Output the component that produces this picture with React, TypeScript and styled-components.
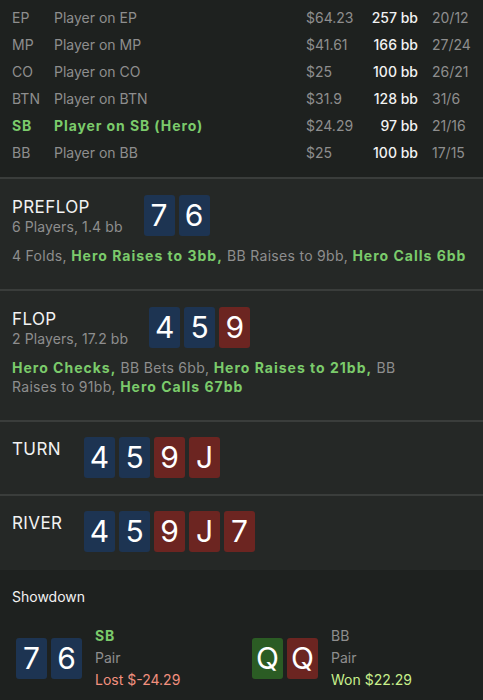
import styled, { createGlobalStyle } from "styled-components";

type Suit = "s" | "h" | "c" | "d";
type Card = { rank: string; suit: Suit };

const GlobalStyle = createGlobalStyle`
  html, body {
    margin: 0;
    padding: 0;
    background: #1e211f;
  }
  body {
    font-family: Inter, "Noto Sans", "Liberation Sans", sans-serif;
    -webkit-font-smoothing: antialiased;
  }
`;

const players = [
  { pos: "EP", name: "Player on EP", stack: "$64.23", bb: "257 bb", stat: "20/12" },
  { pos: "MP", name: "Player on MP", stack: "$41.61", bb: "166 bb", stat: "27/24" },
  { pos: "CO", name: "Player on CO", stack: "$25", bb: "100 bb", stat: "26/21" },
  { pos: "BTN", name: "Player on BTN", stack: "$31.9", bb: "128 bb", stat: "31/6" },
  { pos: "SB", name: "Player on SB (Hero)", stack: "$24.29", bb: "97 bb", stat: "21/16", hero: true },
  { pos: "BB", name: "Player on BB", stack: "$25", bb: "100 bb", stat: "17/15" },
];

const c = (rank: string, suit: Suit): Card => ({ rank, suit });

const board = [c("4", "s"), c("5", "s"), c("9", "h"), c("J", "h"), c("7", "h")];

export default function App() {
  return (
    <Page>
      <GlobalStyle />
      <PlayerTable>
        {players.map((p) => (
          <PlayerRow key={p.pos} $hero={p.hero}>
            <Pos>{p.pos}</Pos>
            <PName>{p.name}</PName>
            <Stack>{p.stack}</Stack>
            <BB>{p.bb}</BB>
            <Stat>{p.stat}</Stat>
          </PlayerRow>
        ))}
      </PlayerTable>

      <Street>
        <StreetHead>
          <StreetInfo>
            <StreetName>PREFLOP</StreetName>
            <StreetMeta>6 Players, 1.4 bb</StreetMeta>
          </StreetInfo>
          <Cards cards={[c("7", "s"), c("6", "s")]} />
        </StreetHead>
        <Actions>
          4 Folds, <Hero>Hero Raises to 3bb,</Hero> BB Raises to 9bb,{" "}
          <Hero>Hero Calls 6bb</Hero>
        </Actions>
      </Street>

      <Street>
        <StreetHead>
          <StreetInfo>
            <StreetName>FLOP</StreetName>
            <StreetMeta>2 Players, 17.2 bb</StreetMeta>
          </StreetInfo>
          <Cards cards={board.slice(0, 3)} />
        </StreetHead>
        <Actions>
          <Hero>Hero Checks,</Hero> BB Bets 6bb, <Hero>Hero Raises to 21bb,</Hero> BB
          <br />
          Raises to 91bb, <Hero>Hero Calls 67bb</Hero>
        </Actions>
      </Street>

      <Street $compact>
        <StreetHead>
          <StreetInfo $narrow>
            <StreetName>TURN</StreetName>
          </StreetInfo>
          <Cards cards={board.slice(0, 4)} />
        </StreetHead>
      </Street>

      <Street $compact $last>
        <StreetHead>
          <StreetInfo $narrow>
            <StreetName>RIVER</StreetName>
          </StreetInfo>
          <Cards cards={board} />
        </StreetHead>
      </Street>

      <Showdown>
        <ShowTitle>Showdown</ShowTitle>
        <ShowGrid>
          <ShowHand>
            <Cards cards={[c("7", "s"), c("6", "s")]} />
            <ShowText>
              <ShowPos $hero>SB</ShowPos>
              <ShowRank>Pair</ShowRank>
              <Result $won={false}>Lost $-24.29</Result>
            </ShowText>
          </ShowHand>
          <ShowHand>
            <Cards cards={[c("Q", "c"), c("Q", "h")]} />
            <ShowText>
              <ShowPos>BB</ShowPos>
              <ShowRank>Pair</ShowRank>
              <Result $won>Won $22.29</Result>
            </ShowText>
          </ShowHand>
        </ShowGrid>
      </Showdown>
    </Page>
  );
}

function Cards({ cards }: { cards: Card[] }) {
  return (
    <CardRow>
      {cards.map((card, i) => (
        <CardBox key={i} $suit={card.suit}>
          {card.rank}
        </CardBox>
      ))}
    </CardRow>
  );
}

const suitColors: Record<Suit, string> = {
  s: "#1d3452",
  h: "#6c2521",
  c: "#2b5c24",
  d: "#1f4f8a",
};

const Page = styled.div`
  width: 483px;
  min-height: 700px;
  background: #1e211f;
  color: #8e8e8e;
`;

const PlayerTable = styled.div`
  padding: 4px 0 11px;
  border-bottom: 2px solid #3a3d3b;
`;

const PlayerRow = styled.div<{ $hero?: boolean }>`
  display: grid;
  grid-template-columns: 42px 252px 64px 48px 1fr;
  align-items: center;
  height: 27px;
  padding-left: 12px;
  font-size: 14px;
  color: ${(p) => (p.$hero ? "#7bcb6b" : "#8e8e8e")};
  font-weight: ${(p) => (p.$hero ? 700 : 400)};
  letter-spacing: ${(p) => (p.$hero ? "0.9px" : "0")};
`;

const Pos = styled.div``;
const PName = styled.div``;

const Stack = styled.div`
  color: #8e8e8e;
  font-weight: 400;
  letter-spacing: 0;
`;

const BB = styled.div`
  text-align: right;
  color: #f2f2f2;
  font-weight: 500;
  letter-spacing: 0;
`;

const Stat = styled.div`
  padding-left: 14px;
  color: #8e8e8e;
  font-weight: 400;
  letter-spacing: 0;
`;

const Street = styled.div<{ $compact?: boolean; $last?: boolean }>`
  background: #252826;
  padding: ${(p) =>
    p.$last ? "15px 12px 18px" : p.$compact ? "15px 12px 16px" : "16px 12px 24px"};
  border-bottom: ${(p) => (p.$last ? "none" : "2px solid #3a3d3b")};
`;

const StreetHead = styled.div`
  display: flex;
  align-items: flex-start;
`;

const StreetInfo = styled.div<{ $narrow?: boolean }>`
  display: flex;
  flex-direction: column;
  padding-top: 2px;
  margin-right: ${(p) => (p.$narrow ? "0" : "21px")};
  min-width: ${(p) => (p.$narrow ? "72px" : "auto")};
`;

const StreetName = styled.div`
  color: #f2f2f2;
  font-size: 17px;
  line-height: 21px;
  letter-spacing: 0.4px;
`;

const StreetMeta = styled.div`
  font-size: 14px;
  line-height: 18px;
  letter-spacing: 0.1px;
`;

const CardRow = styled.div`
  display: flex;
  gap: 4px;
`;

const CardBox = styled.div<{ $suit: Suit }>`
  width: 31px;
  height: 41px;
  border-radius: 3px;
  background: ${(p) => suitColors[p.$suit]};
  color: #ffffff;
  font-size: 30px;
  line-height: 41px;
  text-align: center;
`;

const Actions = styled.div`
  margin-top: 10px;
  font-size: 14px;
  line-height: 19px;
  letter-spacing: 0.3px;
  color: #8e8e8e;
`;

const Hero = styled.span`
  color: #7bcb6b;
  font-weight: 700;
  letter-spacing: 1px;
`;

const Showdown = styled.div`
  background: #1e211f;
  padding: 18px 12px 10px;
`;

const ShowTitle = styled.div`
  color: #f2f2f2;
  font-size: 14px;
  line-height: 18px;
`;

const ShowGrid = styled.div`
  display: grid;
  grid-template-columns: 236px 1fr;
  margin-top: 19px;
`;

const ShowHand = styled.div`
  display: flex;
  align-items: center;
  gap: 13px;
  padding-left: 4px;
`;

const ShowText = styled.div`
  display: flex;
  flex-direction: column;
  font-size: 14px;
  line-height: 22px;
`;

const ShowPos = styled.div<{ $hero?: boolean }>`
  color: ${(p) => (p.$hero ? "#7bcb6b" : "#8e8e8e")};
  font-weight: ${(p) => (p.$hero ? 700 : 400)};
  letter-spacing: ${(p) => (p.$hero ? "0.9px" : "0")};
`;

const ShowRank = styled.div``;

const Result = styled.div<{ $won: boolean }>`
  color: ${(p) => (p.$won ? "#c8ef8c" : "#f2907e")};
`;
